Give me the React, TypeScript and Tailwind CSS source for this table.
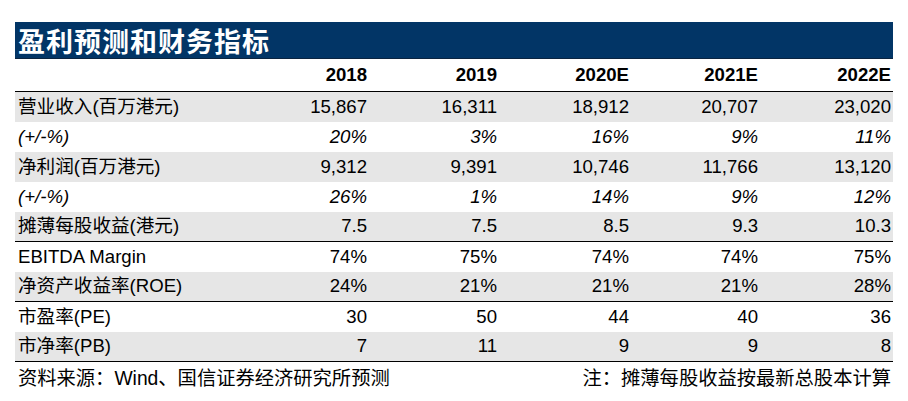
import React from "react";

const font = { fontFamily: '"Liberation Sans", "Noto Sans CJK SC", Arial, sans-serif' };

type Row = { label: string; vals: string[]; italic?: boolean; gray?: boolean; border?: boolean };

const rows: Row[] = [
  { label: "营业收入(百万港元)", vals: ["15,867", "16,311", "18,912", "20,707", "23,020"], gray: true },
  { label: "(+/-%)", vals: ["20%", "3%", "16%", "9%", "11%"], italic: true },
  { label: "净利润(百万港元)", vals: ["9,312", "9,391", "10,746", "11,766", "13,120"], gray: true },
  { label: "(+/-%)", vals: ["26%", "1%", "14%", "9%", "12%"], italic: true },
  { label: "摊薄每股收益(港元)", vals: ["7.5", "7.5", "8.5", "9.3", "10.3"], gray: true, border: true },
  { label: "EBITDA Margin", vals: ["74%", "75%", "74%", "74%", "75%"] },
  { label: "净资产收益率(ROE)", vals: ["24%", "21%", "21%", "21%", "28%"], gray: true, border: true },
  { label: "市盈率(PE)", vals: ["30", "50", "44", "40", "36"] },
  { label: "市净率(PB)", vals: ["7", "11", "9", "9", "8"], gray: true, border: true },
];

const years = ["2018", "2019", "2020E", "2021E", "2022E"];
const grid = "grid grid-cols-[224px_130px_130px_132px_129px_133px]";

export default function App() {
  return (
    <div className="w-[908px] h-[401px] bg-white pt-[22px] pl-[15px] text-black" style={font}>
      <div className="w-[878px]">
        <div className="h-[37px] bg-[#023566] border-b border-[#0b2440] flex items-center pl-[3px]">
          <span
            className="text-white text-[27px] font-bold tracking-[1px] leading-none"
            style={{ fontFamily: '"Noto Sans CJK SC", sans-serif' }}
          >
            盈利预测和财务指标
          </span>
        </div>
        <div className={`${grid} h-[33px] border-b border-black items-center text-[18.6px] font-bold`}>
          <div />
          {years.map((y) => (
            <div key={y} className="text-right pr-[2px]">{y}</div>
          ))}
        </div>
        {rows.map((r, i) => (
          <div
            key={i}
            className={`${grid} h-[30px] items-center text-[18.6px] leading-none ${r.gray ? "bg-[#e6e6e6]" : "bg-white"} ${r.border ? "border-b border-black" : ""} ${r.italic ? "italic" : ""}`}
          >
            <div className="pl-[3px] whitespace-nowrap">{r.label}</div>
            {r.vals.map((v, j) => (
              <div key={j} className="text-right pr-[2px]">{v}</div>
            ))}
          </div>
        ))}
        <div className="h-[34px] flex items-center justify-between text-[19.3px] leading-none">
          <span className="pl-[3px]">资料来源：Wind、国信证券经济研究所预测</span>
          <span className="pr-[2px]">注：摊薄每股收益按最新总股本计算</span>
        </div>
      </div>
    </div>
  );
}
